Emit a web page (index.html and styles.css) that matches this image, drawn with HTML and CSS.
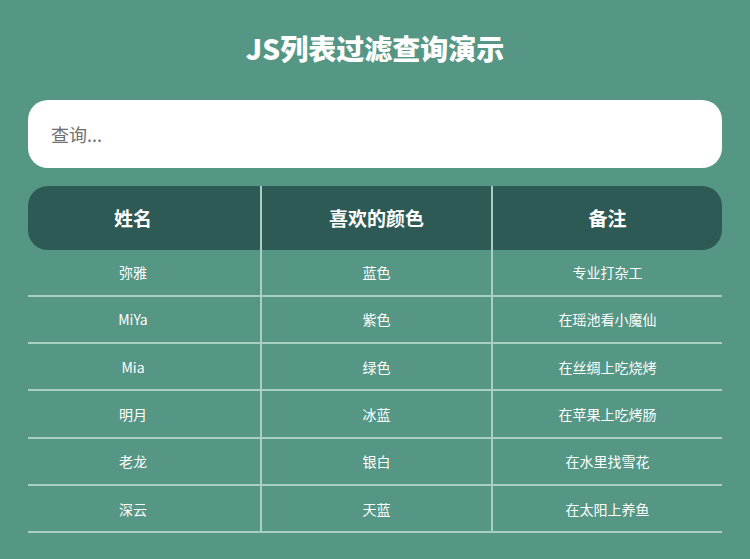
FILE: index.html
```html
<!DOCTYPE html>
<html lang="zh-CN">
<head>
<meta charset="utf-8">
<title>JS列表过滤查询演示</title>
<link rel="stylesheet" href="styles.css">
</head>
<body>
<main class="wrap">
  <h1 class="title">JS列表过滤查询演示</h1>
  <input class="search" type="text" placeholder="查询...">
  <table class="list">
    <colgroup>
      <col class="c1"><col class="c2"><col class="c3">
    </colgroup>
    <thead>
      <tr><th>姓名</th><th>喜欢的颜色</th><th>备注</th></tr>
    </thead>
    <tbody>
      <tr><td>弥雅</td><td>蓝色</td><td>专业打杂工</td></tr>
      <tr><td>MiYa</td><td>紫色</td><td>在瑶池看小魔仙</td></tr>
      <tr><td>Mia</td><td>绿色</td><td>在丝绸上吃烧烤</td></tr>
      <tr><td>明月</td><td>冰蓝</td><td>在苹果上吃烤肠</td></tr>
      <tr><td>老龙</td><td>银白</td><td>在水里找雪花</td></tr>
      <tr><td>深云</td><td>天蓝</td><td>在太阳上养鱼</td></tr>
    </tbody>
  </table>
</main>
</body>
</html>
```
FILE: styles.css
```css
html, body {
  margin: 0;
  padding: 0;
  background: #559684;
  font-family: "Noto Sans CJK SC", "Noto Sans", sans-serif;
  color: #fff;
}
.wrap {
  padding: 0 28px;
  display: flex;
  flex-direction: column;
}
.title {
  margin: 30px 0 34px;
  font-size: 28px;
  line-height: 36px;
  font-weight: 900;
  text-align: center;
}
.search {
  box-sizing: border-box;
  height: 68px;
  width: 100%;
  border: none;
  border-radius: 20px;
  background: #fff;
  padding: 0 23px;
  font-family: inherit;
  font-size: 18px;
  color: #333;
  outline: none;
  margin-bottom: 18px;
}
.search::placeholder {
  color: #6f6f6f;
}
.list {
  width: 100%;
  border-collapse: separate;
  border-spacing: 0;
  table-layout: fixed;
}
.c1 { width: 234px; }
.c2 { width: 231px; }
.c3 { width: 229px; }
.list th {
  background: #2e5a56;
  height: 63.5px;
  padding: 0;
  font-size: 19px;
  font-weight: 700;
  text-align: center;
  border-right: 2px solid #a9cfc5;
}
.list th:first-child {
  border-radius: 20px 0 0 20px;
  padding-right: 22px;
}
.list th:last-child {
  border-right: none;
  border-radius: 0 20px 20px 0;
}
.list td {
  height: 45.33px;
  padding: 0;
  font-size: 14px;
  text-align: center;
  border-right: 2px solid #a9cfc5;
  border-bottom: 2px solid #a9cfc5;
}
.list td:first-child {
  padding-right: 22px;
}
.list td:last-child {
  border-right: none;
}
```
